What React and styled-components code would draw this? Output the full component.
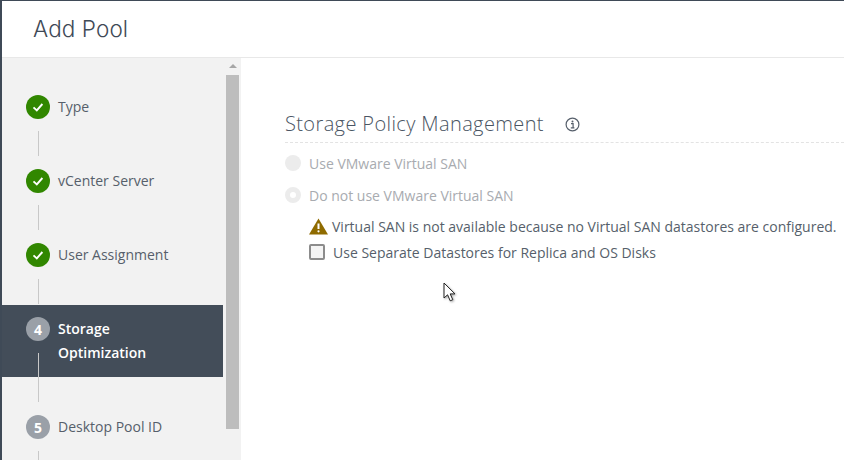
import React from "react";
import styled, { createGlobalStyle } from "styled-components";

const GlobalStyle = createGlobalStyle`
  html, body {
    margin: 0;
    padding: 0;
    height: 460px;
    overflow: hidden;
    background: #fff;
    font-family: "Open Sans", "Liberation Sans", sans-serif;
  }
`;

const Modal = styled.div`
  position: relative;
  width: 844px;
  height: 460px;
  box-sizing: border-box;
  overflow: hidden;
  border-top: 1px solid #3f4a57;
  border-left: 2px solid #3f4a57;
  display: flex;
  flex-direction: column;
`;

const Header = styled.header`
  height: 57px;
  box-sizing: border-box;
  flex: none;
  border-bottom: 1px solid #e8e8e8;
  padding: 0 0 2px 31px;
  display: flex;
  align-items: center;
`;

const Title = styled.h1`
  margin: 0;
  font-family: "Inter", "Liberation Sans", sans-serif;
  font-size: 22.5px;
  font-weight: 300;
  letter-spacing: 0.1px;
  color: #3f4a57;
`;

const Body = styled.div`
  flex: 1;
  display: flex;
  min-height: 0;
`;

const Sidebar = styled.nav`
  width: 239px;
  flex: none;
  display: flex;
  background: #f2f2f2;
`;

const StepList = styled.ol`
  list-style: none;
  margin: 0;
  padding: 25px 0 0;
  width: 221px;
  flex: none;
`;

const Step = styled.li`
  position: relative;
  display: flex;
  align-items: flex-start;
  gap: 8px;
  padding: ${(p) => (p.$active ? "12px 24px" : "12px 24px 0")};
  margin-bottom: 26px;
  min-height: ${(p) => (p.$active ? "auto" : "36px")};
  background: ${(p) => (p.$active ? "#434d59" : "transparent")};

  &::after {
    content: "";
    position: absolute;
    left: 36px;
    top: 48px;
    bottom: -25px;
    width: 1px;
    background: #c8c8c8;
  }
`;

const Badge = styled.span`
  width: 24px;
  height: 24px;
  flex: none;
  border-radius: 50%;
  display: flex;
  align-items: center;
  justify-content: center;
  background: ${(p) => (p.$done ? "#318700" : "#9aa0a8")};
  color: #fff;
  font-size: 14px;
  font-weight: 700;
`;

const StepLabel = styled.span`
  font-size: 14px;
  line-height: 24px;
  font-weight: ${(p) => (p.$active ? 600 : 400)};
  color: ${(p) => (p.$active ? "#fff" : "#565f6b")};
  white-space: pre-line;
`;

const Scrollbar = styled.div`
  flex: 1;
  display: flex;
  flex-direction: column;
  align-items: center;
  padding: 6px 0 0 1px;
`;

const ScrollUp = styled.span`
  width: 0;
  height: 0;
  border-left: 4px solid transparent;
  border-right: 4px solid transparent;
  border-bottom: 4px solid #a6a6a6;
  margin-bottom: 7px;
`;

const ScrollThumb = styled.div`
  width: 13px;
  height: 354px;
  background: #bdbdbd;
`;

const Main = styled.main`
  flex: 1;
  padding: 51px 0 0 44px;
`;

const HeadingRow = styled.div`
  display: flex;
  align-items: center;
  gap: 21px;
  height: 29px;
  padding-bottom: 4px;
  border-bottom: 1px dashed #e3e3e3;
`;

const Heading = styled.h2`
  margin: 0;
  font-size: 20px;
  font-weight: 300;
  letter-spacing: 0.38px;
  color: #4a5563;
`;

const InfoSvg = styled.svg`
  margin-top: 2px;
`;

const RadioGroup = styled.div`
  margin-top: 4px;
`;

const RadioRow = styled.label`
  display: flex;
  align-items: center;
  gap: 8px;
  height: 32px;
  font-size: 14px;
  color: #a8abb0;
`;

const Radio = styled.span`
  box-sizing: border-box;
  width: 16px;
  height: 16px;
  border-radius: 50%;
  background: ${(p) => (p.$checked ? "#fff" : "#ececec")};
  border: ${(p) => (p.$checked ? "5px solid #ececec" : "none")};
`;

const Options = styled.div`
  padding-left: 24px;
  margin-top: 2px;
`;

const WarningRow = styled.div`
  display: flex;
  align-items: center;
  gap: 4px;
  height: 26px;
  font-size: 14px;
  color: #565f6b;
  white-space: nowrap;
`;

const CheckRow = styled.label`
  display: flex;
  align-items: center;
  gap: 8px;
  height: 26px;
  font-size: 14px;
  color: #565f6b;
  white-space: nowrap;
`;

const Checkbox = styled.span`
  box-sizing: border-box;
  width: 16px;
  height: 16px;
  border: 2px solid #8c8c8c;
  border-radius: 2px;
  background: #f4f4f4;
`;

const Cursor = styled.svg`
  position: absolute;
  left: 441px;
  top: 281px;
  filter: drop-shadow(1px 1px 1px rgba(0, 0, 0, 0.35));
`;

function Check() {
  return (
    <svg width="14" height="14" viewBox="0 0 14 14">
      <path d="M2.5 7.4 5.8 10.4 11.4 4" fill="none" stroke="#fff" strokeWidth="1.9" />
    </svg>
  );
}

function InfoIcon() {
  return (
    <InfoSvg width="15" height="15" viewBox="0 0 15 15">
      <circle cx="7.5" cy="7.5" r="6.4" fill="none" stroke="#565f6b" strokeWidth="1.2" />
      <circle cx="7.5" cy="4.4" r="1" fill="#565f6b" />
      <path d="M6 6.6h2.1v4M5.8 10.9h3.6" fill="none" stroke="#565f6b" strokeWidth="1.2" />
    </InfoSvg>
  );
}

function WarningIcon() {
  return (
    <svg width="19" height="17" viewBox="0 0 19 17">
      <path d="M9.5 0.5 19 16.5H0Z" fill="#8f6b00" />
      <path d="M9.5 5.5v5.5" stroke="#fff" strokeWidth="2" />
      <circle cx="9.5" cy="13.3" r="1.1" fill="#fff" />
    </svg>
  );
}

const steps = [
  { label: "Type", done: true },
  { label: "vCenter Server", done: true },
  { label: "User Assignment", done: true },
  { label: "Storage\nOptimization", num: 4, active: true },
  { label: "Desktop Pool ID", num: 5 },
];

export default function App() {
  return (
    <>
      <GlobalStyle />
      <Modal>
        <Header>
          <Title>Add Pool</Title>
        </Header>
        <Body>
          <Sidebar>
            <StepList>
              {steps.map((s) => (
                <Step key={s.label} $active={s.active}>
                  <Badge $done={s.done}>{s.done ? <Check /> : s.num}</Badge>
                  <StepLabel $active={s.active}>{s.label}</StepLabel>
                </Step>
              ))}
            </StepList>
            <Scrollbar>
              <ScrollUp />
              <ScrollThumb />
            </Scrollbar>
          </Sidebar>
          <Main>
            <HeadingRow>
              <Heading>Storage Policy Management</Heading>
              <InfoIcon />
            </HeadingRow>
            <RadioGroup>
              <RadioRow>
                <Radio />
                Use VMware Virtual SAN
              </RadioRow>
              <RadioRow>
                <Radio $checked />
                Do not use VMware Virtual SAN
              </RadioRow>
            </RadioGroup>
            <Options>
              <WarningRow>
                <WarningIcon />
                Virtual SAN is not available because no Virtual SAN datastores are configured.
              </WarningRow>
              <CheckRow>
                <Checkbox />
                Use Separate Datastores for Replica and OS Disks
              </CheckRow>
            </Options>
          </Main>
        </Body>
        <Cursor width="14" height="21" viewBox="0 0 14 21">
          <path d="M1 1v15l3.6-3.2 2.6 6 2.6-1.1-2.6-5.8h4.8Z" fill="#fff" stroke="#222" strokeWidth="1" />
        </Cursor>
      </Modal>
    </>
  );
}
